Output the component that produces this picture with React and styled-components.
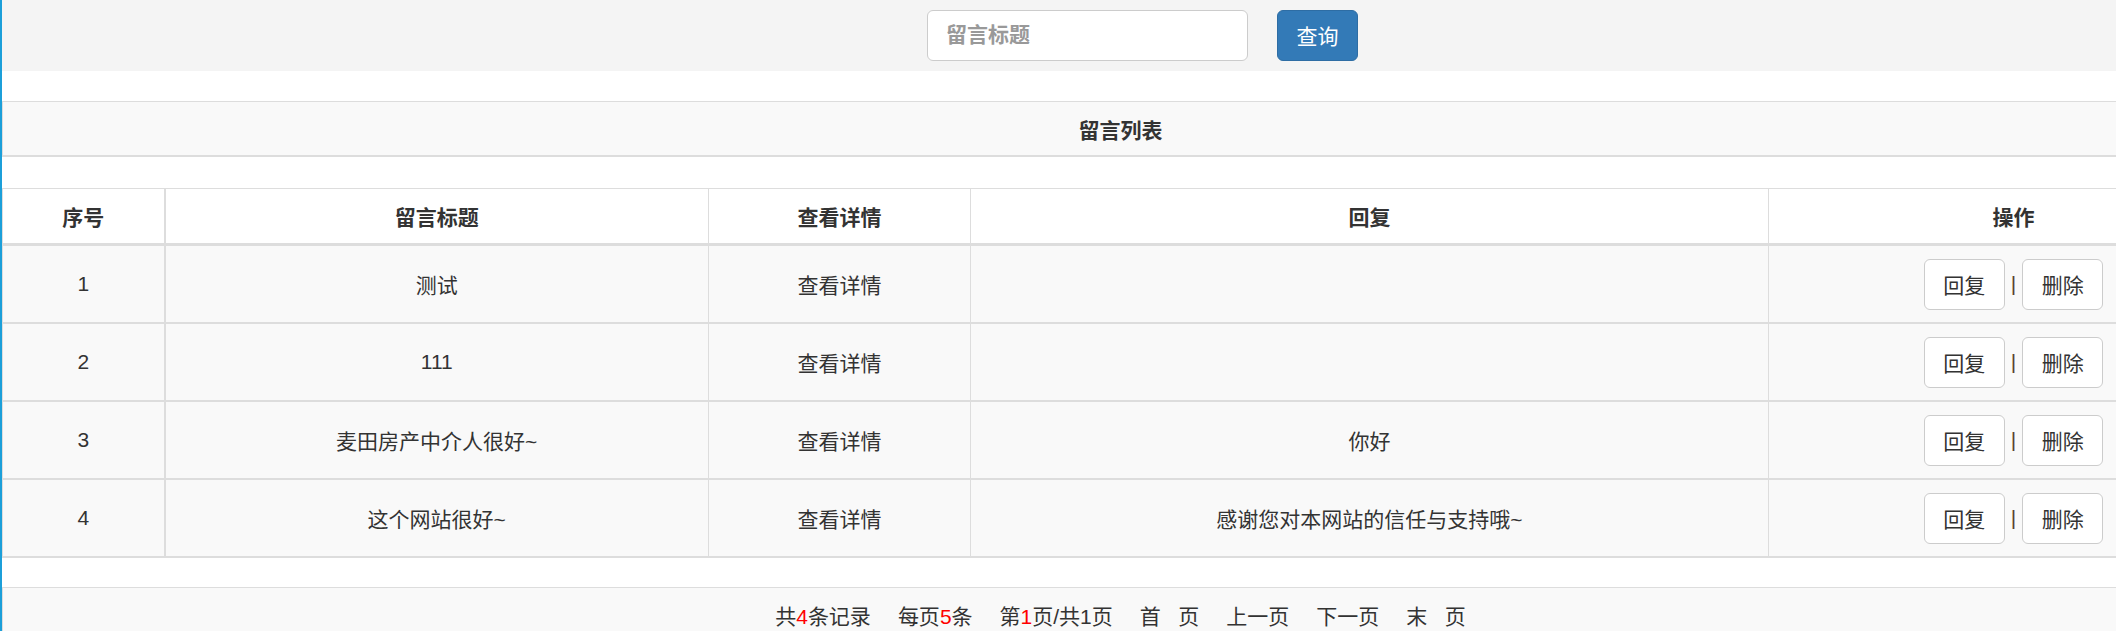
import React from 'react'
import styled, { createGlobalStyle } from 'styled-components'

const GlobalStyle = createGlobalStyle`
  html, body {
    margin: 0;
    padding: 0;
    background: #fff;
    overflow: hidden;
  }
  body {
    font-family: "Liberation Sans", "Noto Sans CJK SC", sans-serif;
    font-size: 21px;
    color: #333;
  }
`

const messages = [
  { id: 1, title: '测试', reply: '' },
  { id: 2, title: '111', reply: '' },
  { id: 3, title: '麦田房产中介人很好~', reply: '你好' },
  { id: 4, title: '这个网站很好~', reply: '感谢您对本网站的信任与支持哦~' },
]

const App = () => {
  return (
    <>
      <GlobalStyle />
      <Page>
        <SearchBar>
          <SearchInput placeholder="留言标题" />
          <PrimaryButton>查询</PrimaryButton>
        </SearchBar>

        <Panel>留言列表</Panel>

        <Table>
          <colgroup>
            <col style={{ width: 162 }} />
            <col style={{ width: 544 }} />
            <col style={{ width: 262 }} />
            <col style={{ width: 798 }} />
            <col style={{ width: 490 }} />
          </colgroup>
          <thead>
            <tr>
              <Th>序号</Th>
              <Th>留言标题</Th>
              <Th>查看详情</Th>
              <Th>回复</Th>
              <Th>操作</Th>
            </tr>
          </thead>
          <tbody>
            {messages.map((m) => (
              <Row key={m.id}>
                <Td>{m.id}</Td>
                <Td>{m.title}</Td>
                <Td>查看详情</Td>
                <Td>{m.reply}</Td>
                <Td>
                  <Actions>
                    <ActionButton>回复</ActionButton>
                    <Divider>|</Divider>
                    <ActionButton>删除</ActionButton>
                  </Actions>
                </Td>
              </Row>
            ))}
          </tbody>
        </Table>

        <Pager>
          <span>共<Red>4</Red>条记录</span>
          <span>每页<Red>5</Red>条</span>
          <span>第<Red>1</Red>页/共1页</span>
          <span>首&nbsp;&nbsp;&nbsp;页</span>
          <span>上一页</span>
          <span>下一页</span>
          <span>末&nbsp;&nbsp;&nbsp;页</span>
        </Pager>
      </Page>
    </>
  )
}

const Page = styled.div`
  width: 2236px;
  min-height: 631px;
  border-left: 2px solid #1c9fd9;
  display: flex;
  flex-direction: column;
`

const SearchBar = styled.div`
  height: 71px;
  background: #f4f4f4;
  display: flex;
  align-items: center;
  justify-content: center;
  gap: 29px;
  padding-left: 45px;
  padding-bottom: 1px;
  box-sizing: border-box;
`

const SearchInput = styled.input`
  width: 321px;
  height: 51px;
  box-sizing: border-box;
  border: 1px solid #ccc;
  border-radius: 6px;
  background: #fff;
  padding: 0 18px;
  font-family: inherit;
  font-size: 21px;
  color: #555;
  outline: none;
  &::placeholder {
    color: #999;
    font-weight: bold;
  }
`

const PrimaryButton = styled.button`
  width: 81px;
  height: 51px;
  box-sizing: border-box;
  border: 1px solid #2e6da4;
  border-radius: 6px;
  background: #337ab7;
  color: #fff;
  font-family: inherit;
  font-size: 21px;
`

const Panel = styled.div`
  margin-top: 30px;
  height: 56px;
  box-sizing: border-box;
  border-top: 1px solid #ddd;
  border-left: 1px solid #ddd;
  border-bottom: 2px solid #ddd;
  background: #f9f9f9;
  display: flex;
  align-items: center;
  justify-content: center;
  font-weight: bold;
`

const Table = styled.table`
  margin-top: 31px;
  width: 2256px;
  table-layout: fixed;
  border-collapse: collapse;
  border-top: 1px solid #ddd;
  border-left: 1px solid #ddd;
  border-bottom: 2px solid #ddd;
`

const Th = styled.th`
  height: 54px;
  padding: 0;
  text-align: center;
  vertical-align: middle;
  font-weight: bold;
  background: #fff;
  border-bottom: 3px solid #ddd;
  border-right: 1px solid #ddd;
  &:first-child {
    border-right-width: 2px;
  }
`

const Row = styled.tr`
  background: #f9f9f9;
  & + & td {
    border-top: 2px solid #ddd;
  }
`

const Td = styled.td`
  height: 76px;
  padding: 0;
  text-align: center;
  vertical-align: middle;
  border-right: 1px solid #ddd;
  &:first-child {
    border-right-width: 2px;
  }
`

const Actions = styled.div`
  display: flex;
  align-items: center;
  justify-content: center;
`

const ActionButton = styled.button`
  width: 81px;
  height: 51px;
  box-sizing: border-box;
  border: 1px solid #ccc;
  border-radius: 6px;
  background: #fff;
  color: #333;
  font-family: inherit;
  font-size: 21px;
`

const Divider = styled.span`
  margin: 0 6px;
  color: #5a4030;
`

const Pager = styled.div`
  margin-top: 29px;
  flex: 1;
  border-top: 1px solid #ddd;
  border-left: 1px solid #ddd;
  background: #f9f9f9;
  display: flex;
  justify-content: center;
  gap: 27px;
  padding-top: 16px;
  line-height: 26px;
`

const Red = styled.span`
  color: #f00;
`

export default App
